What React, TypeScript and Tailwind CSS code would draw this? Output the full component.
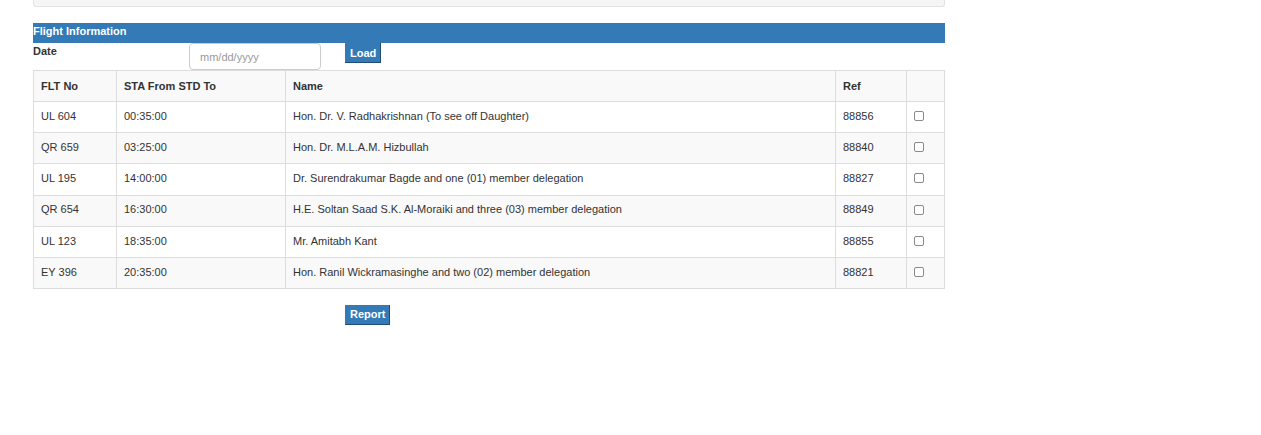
const flights = [
  { flt: "UL 604", time: "00:35:00", name: "Hon. Dr. V. Radhakrishnan (To see off Daughter)", ref: "88856" },
  { flt: "QR 659", time: "03:25:00", name: "Hon. Dr. M.L.A.M. Hizbullah", ref: "88840" },
  { flt: "UL 195", time: "14:00:00", name: "Dr. Surendrakumar Bagde and one (01) member delegation", ref: "88827" },
  { flt: "QR 654", time: "16:30:00", name: "H.E. Soltan Saad S.K. Al-Moraiki and three (03) member delegation", ref: "88849" },
  { flt: "UL 123", time: "18:35:00", name: "Mr. Amitabh Kant", ref: "88855" },
  { flt: "EY 396", time: "20:35:00", name: "Hon. Ranil Wickramasinghe and two (02) member delegation", ref: "88821" },
];

const cell = "border border-[#dddddd] px-[7px] h-[31.15px] align-middle";
const bodyCell = cell + " pb-[2px]";

export default function App() {
  return (
    <div className="min-h-screen bg-white text-[11px] text-[#333333] font-['Liberation_Sans',Arial,sans-serif]">
      <div className="pl-[33px] w-[945px]">
        {/* leftover panel above */}
        <div className="h-[7px] bg-[#f5f5f5] border border-t-0 border-[#e3e3e3] rounded-b-[3px]" />

        {/* Header */}
        <div className="mt-[16px] h-[20px] bg-[#337ab7] text-white font-bold leading-[17px]">
          Flight Information
        </div>

        {/* Date row */}
        <div className="flex items-start h-[27px]">
          <div className="w-[156px] font-bold leading-[16px]">Date</div>
          <input
            type="text"
            placeholder="mm/dd/yyyy"
            className="w-[132px] h-[27px] border border-[#cccccc] rounded-[4px] px-[10px] text-[11px] placeholder:text-[#999999] outline-none"
          />
          <button className="ml-[24px] h-[20px] pl-[5px] pr-[4px] bg-[#337ab7] text-white font-bold border-r border-b border-[#1f4d75] leading-[18px]">
            Load
          </button>
        </div>

        {/* Table */}
        <table className="w-[911px] border-collapse table-fixed">
          <colgroup>
            <col className="w-[83px]" />
            <col className="w-[169px]" />
            <col className="w-[550px]" />
            <col className="w-[71px]" />
            <col className="w-[38px]" />
          </colgroup>
          <tbody>
            <tr className="bg-[#f9f9f9] font-bold text-left">
              <td className={cell}>FLT No</td>
              <td className={cell}>STA From STD To</td>
              <td className={cell}>Name</td>
              <td className={cell}>Ref</td>
              <td className={cell}></td>
            </tr>
            {flights.map((f, i) => (
              <tr key={f.ref} className={i % 2 === 1 ? "bg-[#f9f9f9]" : "bg-white"}>
                <td className={bodyCell}>{f.flt}</td>
                <td className={bodyCell}>{f.time}</td>
                <td className={bodyCell}>{f.name}</td>
                <td className={bodyCell}>{f.ref}</td>
                <td className={bodyCell}>
                  <input
                    type="checkbox"
                    className="appearance-none block w-[10px] h-[10px] border border-[#8a8a8a] rounded-[2px] bg-white"
                  />
                </td>
              </tr>
            ))}
          </tbody>
        </table>

        <div className="pt-[16px] pl-[312px]">
          <button className="h-[20px] pl-[5px] pr-[4px] bg-[#337ab7] text-white font-bold border-r border-b border-[#1f4d75] leading-[18px]">
            Report
          </button>
        </div>
      </div>
    </div>
  );
}
